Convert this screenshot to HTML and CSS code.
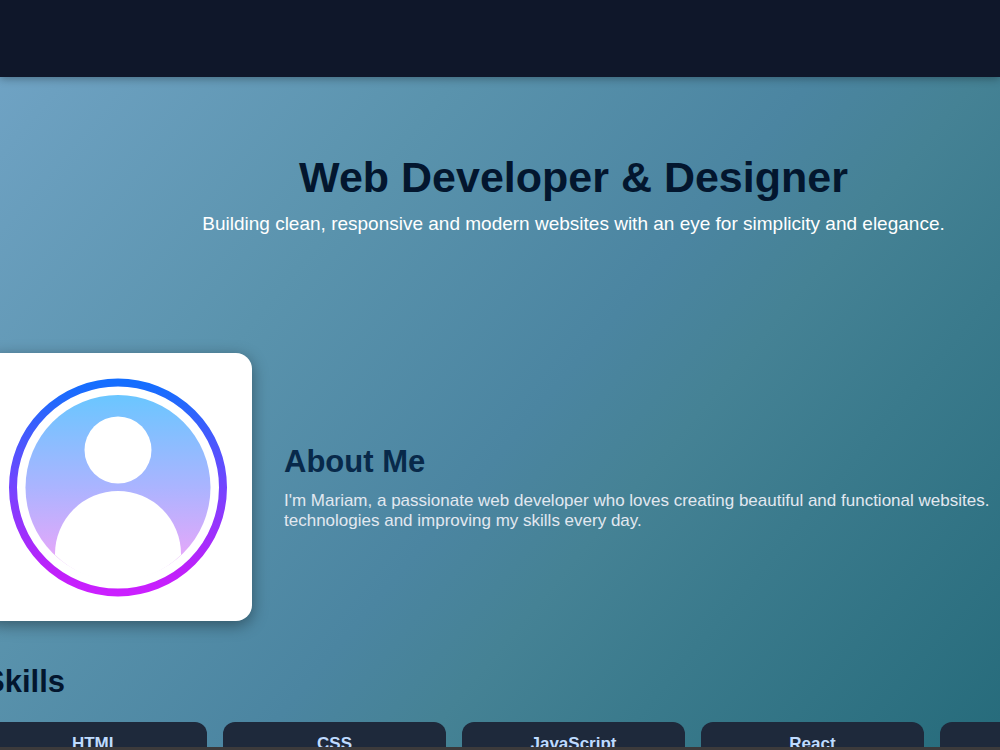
FILE: index.html
```html
<!DOCTYPE html>
<html lang="en">
<head>
  <meta charset="UTF-8">
  <title>Mariam | Web Developer</title>
  <meta name="viewport" content="width=device-width, initial-scale=1.0">
  <link rel="stylesheet" href="styles.css">
</head>
<body>

<header class="navbar"></header>

<main class="page">
  <section class="hero">
    <h1>Web Developer &amp; Designer</h1>
    <p>Building clean, responsive and modern websites with an eye for simplicity and elegance.</p>
  </section>

  <section class="about">
    <div class="photo">
      <svg viewBox="0 0 268 268" role="img" aria-label="Profile">
        <defs>
          <linearGradient id="ring" x1="0" y1="0" x2="0" y2="1">
            <stop offset="0" stop-color="#146eff"/>
            <stop offset="0.1" stop-color="#2468fc"/>
            <stop offset="0.5" stop-color="#7544ff"/>
            <stop offset="0.9" stop-color="#bf20fa"/>
            <stop offset="1" stop-color="#cb20ff"/>
          </linearGradient>
          <linearGradient id="face" x1="0" y1="0" x2="0" y2="1">
            <stop offset="0" stop-color="#6ac6ff"/>
            <stop offset="0.5" stop-color="#abb4ff"/>
            <stop offset="0.86" stop-color="#e2a8fa"/>
          </linearGradient>
        </defs>
        <circle cx="134" cy="134.500" r="105" fill="none" stroke="url(#ring)" stroke-width="8"/>
        <circle cx="134" cy="134.500" r="92.500" fill="url(#face)"/>
        <circle cx="134" cy="97" r="33.500" fill="#fff"/>
        <path d="M71 201 A63 63 0 0 1 197 201 L197 202 A93 93 0 0 1 134 228 A93 93 0 0 1 71 202 Z" fill="#fff"/>
      </svg>
    </div>
    <div class="about-text">
      <h2>About Me</h2>
      <p>I'm Mariam, a passionate web developer who loves creating beautiful and functional websites.<br>technologies and improving my skills every day.</p>
    </div>
  </section>

  <section class="skills">
    <h2>Skills</h2>
    <div class="skills-grid">
      <div class="skill">HTML</div>
      <div class="skill">CSS</div>
      <div class="skill">JavaScript</div>
      <div class="skill">React</div>
      <div class="skill"></div>
    </div>
  </section>
</main>

</body>
</html>
```
FILE: styles.css
```css
* { margin: 0; padding: 0; box-sizing: border-box; }

body {
  font-family: "Liberation Sans", Arial, sans-serif;
  height: 100vh;
  overflow: hidden;
  display: flex;
  flex-direction: column;
  border-bottom: 3px solid #3c3a3b;
  background: linear-gradient(130deg, #72a5c8 0%, #6ca0c0 8%, #5a93ad 32%, #4b85a1 54%, #458295 64%, #3a7a8c 76%, #266b7b 100%);
}

.navbar { flex: none; height: 77px; background: #0f172a; box-shadow: 0 2px 8px rgba(0, 0, 0, 0.3); }

/* content is wider than the window and runs past both sides */
.page { flex: 1; min-height: 0; margin: 0 -163px 0 -16px; }

.hero { padding: 75px 16px 0; text-align: center; }
.hero h1 { font-size: 43px; line-height: 50px; color: #03162e; }
.hero p { margin-top: 11px; font-size: 19px; line-height: 22px; color: #fff; }

.about { display: flex; align-items: center; gap: 32px; margin-top: 118px; }
.photo { flex: none; width: 268px; background: #fff; border-radius: 16px; box-shadow: 0 4px 16px rgba(0, 0, 0, 0.4); }
.photo svg { display: block; width: 100%; }
.about-text h2 { font-size: 31px; line-height: 36px; color: #08294a; }
.about-text p { margin-top: 11px; font-size: 17px; line-height: 20px; color: #e2e8f0; white-space: nowrap; }

.skills { margin-top: 43px; }
.skills h2 { font-size: 31px; line-height: 36px; color: #03162e; }
.skills-grid { display: grid; grid-template-columns: repeat(5, 1fr); gap: 16px; margin-top: 22px; }
.skill { padding: 12px 16px; min-height: 60px; border-radius: 12px; background: #1e293b; color: #bfdbfe; font-size: 17px; line-height: 20px; font-weight: bold; text-align: center; }
```
